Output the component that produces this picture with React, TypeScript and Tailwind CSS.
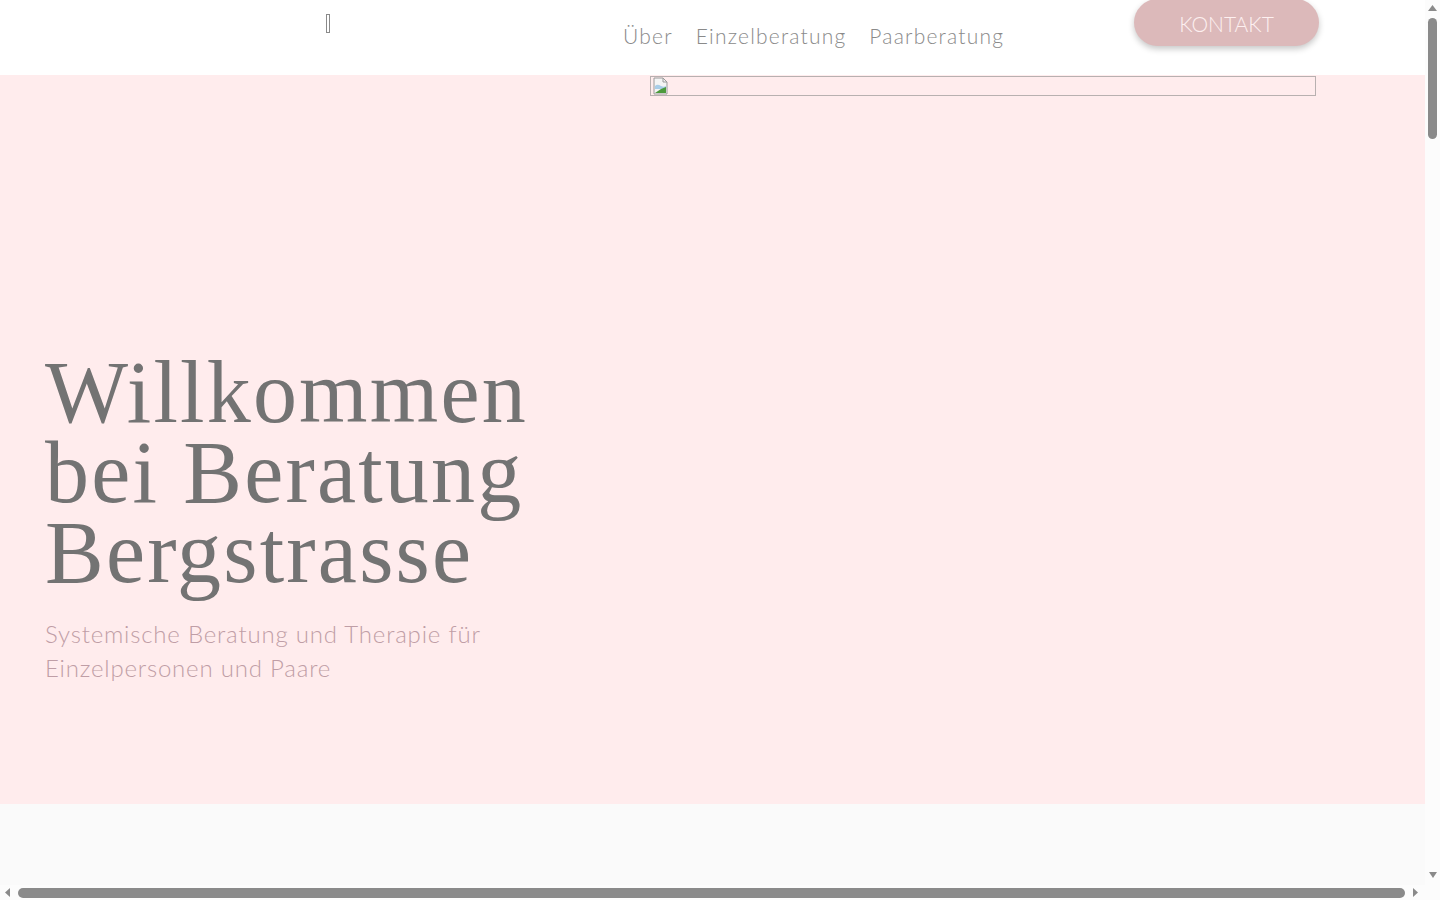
import React from 'react';

const sans = { fontFamily: 'Lato, "Open Sans", sans-serif' };
const serif = { fontFamily: '"Liberation Serif", "DejaVu Serif", serif' };

function BrokenImage() {
  return (
    <svg width="18" height="18" viewBox="0 0 18 18" className="shrink-0">
      <path d="M2 1h9l4 4v12H2z" fill="#f4f4f4" stroke="#9a9a9a" strokeWidth="1" />
      <path d="M11 1v4h4" fill="none" stroke="#9a9a9a" strokeWidth="1" />
      <path d="M3 9c2-2 4-1 6 0s4 1 5 0v3H3z" fill="#a8cde8" />
      <path d="M3 16l6-4 5-2v6z" fill="#4c9a3c" />
    </svg>
  );
}

// classic window scroll rails, drawn over the page edge
function ScrollRails() {
  return (
    <>
      <div className="fixed right-0 top-0 flex h-[885px] w-[15px] flex-col items-center bg-[#fcfcfc]">
        <svg width="9" height="6" viewBox="0 0 9 6" className="mt-[5px]">
          <path d="M4.5 0L9 6H0z" fill="#8a8a8a" />
        </svg>
        <div className="mt-[7px] h-[121px] w-[9px] rounded-full bg-[#8a8a8a]" />
        <svg width="8" height="6" viewBox="0 0 8 6" className="mt-auto mb-[7px]">
          <path d="M0 0h8L4 6z" fill="#8a8a8a" />
        </svg>
      </div>
      <div className="fixed bottom-0 left-0 flex h-[15px] w-[1440px] items-center bg-[#fcfcfc]">
        <svg width="5" height="9" viewBox="0 0 5 9" className="ml-[5px]">
          <path d="M5 0v9L0 4.5z" fill="#8a8a8a" />
        </svg>
        <div className="ml-[8px] h-[10px] w-[1387px] rounded-full bg-[#8a8a8a]" />
        <svg width="5" height="9" viewBox="0 0 5 9" className="ml-[8px]">
          <path d="M0 0v9l5-4.5z" fill="#8a8a8a" />
        </svg>
      </div>
    </>
  );
}

export default function App() {
  return (
    <div className="w-[1440px] bg-[#fafafa]" style={sans}>
      {/* Header */}
      <header className="flex h-[75px] items-start bg-white">
        <div className="w-[623px] shrink-0 pl-[326px] pt-[14px]">
          <div className="h-[19px] w-[4px] border border-[#8a8a8a]" />
        </div>
        <nav className="flex w-[511px] shrink-0 items-center gap-[23px] pt-[20px] text-[21px] font-light tracking-[1.2px] text-[#8a8a8a]">
          <a href="#">Über</a>
          <a href="#">Einzelberatung</a>
          <a href="#">Paarberatung</a>
        </nav>
        <a
          href="#"
          className="-mt-[1px] flex h-[47px] w-[185px] items-center justify-center rounded-full bg-[#dcb9ba] pt-[3px] text-[21px] font-light text-[#fdf0f0] shadow-[0_3px_6px_rgba(0,0,0,0.22)]"
        >
          KONTAKT
        </a>
      </header>

      {/* Hero */}
      <section className="flex h-[729px] bg-[#ffeced]">
        <div className="w-[650px] shrink-0 pl-[45px] pt-[278px]">
          <h1 className="text-[88px] font-normal leading-[80px] tracking-[2.2px] text-[#737373]" style={serif}>
            Willkommen
            <br />
            bei Beratung
            <br />
            Bergstrasse
          </h1>
          <p className="mt-[24px] max-w-[480px] text-[24px] font-light leading-[34px] tracking-[0.8px] text-[#bf9ea6]">
            Systemische Beratung und Therapie für Einzelpersonen und Paare
          </p>
        </div>
        <div className="pt-px">
          <div className="flex h-[20px] w-[666px] items-center border border-[#b8b0b0] pl-px">
            <BrokenImage />
          </div>
        </div>
      </section>

      {/* Content below the fold */}
      <section className="h-[5300px] bg-[#fafafa]" />

      <ScrollRails />
    </div>
  );
}
